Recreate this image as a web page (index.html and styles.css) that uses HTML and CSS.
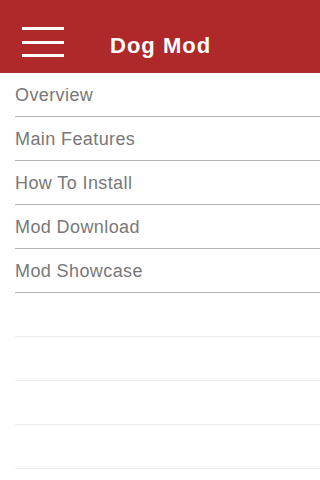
FILE: index.html
```html
<!DOCTYPE html>
<html>
<head>
<meta charset="utf-8">
<link rel="stylesheet" href="styles.css">
</head>
<body>
<header class="bar">
  <div class="burger"><span></span><span></span><span></span></div>
  <h1 class="title">Dog Mod</h1>
</header>
<ul class="list">
  <li class="row">Overview</li>
  <li class="row">Main Features</li>
  <li class="row">How To Install</li>
  <li class="row">Mod Download</li>
  <li class="row">Mod Showcase</li>
  <li class="row empty"></li>
  <li class="row empty"></li>
  <li class="row empty"></li>
  <li class="row empty"></li>
</ul>
</body>
</html>
```
FILE: styles.css
```css
html, body {
  margin: 0;
  padding: 0;
  background: #ffffff;
  width: 320px;
  height: 480px;
  overflow: hidden;
  font-family: "Liberation Sans", Arial, sans-serif;
}
.bar {
  box-sizing: border-box;
  height: 73px;
  background: #b0292a;
  display: flex;
  align-items: flex-start;
  padding: 20px 0 0 22px;
}
.burger {
  margin-top: 7px;
  width: 42px;
  display: flex;
  flex-direction: column;
  gap: 10.5px;
}
.burger span {
  display: block;
  height: 3px;
  background: #ffffff;
}
.title {
  margin: 15px 0 0 46px;
  font-size: 22px;
  line-height: 22px;
  font-weight: bold;
  letter-spacing: 1px;
  color: #ffffff;
}
.list {
  list-style: none;
  margin: 0;
  padding: 0;
}
.row {
  box-sizing: border-box;
  height: 44px;
  margin-left: 15px;
  border-bottom: 1px solid #b4b4b4;
  display: flex;
  align-items: center;
  font-size: 18px;
  color: #787878;
  letter-spacing: 0.4px;
  padding-top: 1px;
}
.row.empty {
  border-bottom: 1px solid #ebebeb;
}
```
